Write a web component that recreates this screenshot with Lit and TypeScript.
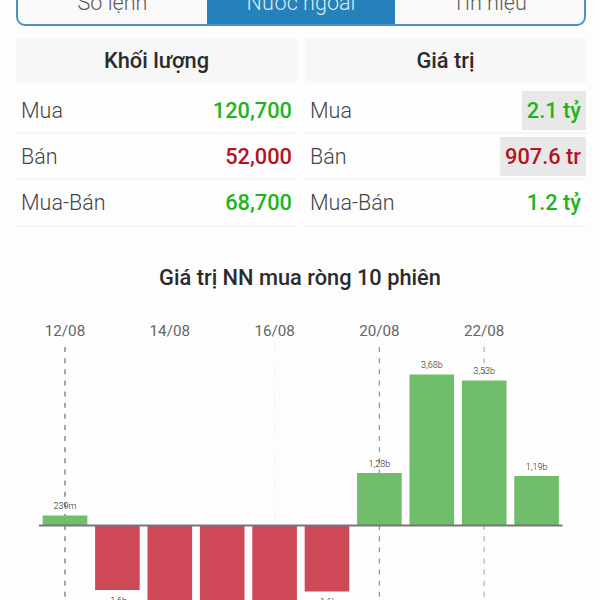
import { LitElement, html, svg, css } from 'lit';
import { customElement, property } from 'lit/decorators.js';
import { classMap } from 'lit/directives/class-map.js';

interface Row {
  label: string;
  value: string;
  tone: 'up' | 'down';
  flash?: boolean;
}

interface Bar {
  height: number;
  label: string;
  date?: string;
  guide?: 'dark' | 'mid' | 'light' | 'faint';
}

@customElement('trade-table')
class TradeTable extends LitElement {
  @property() heading = '';
  @property({ attribute: false }) rows: Row[] = [];

  static styles = css`
    :host {
      display: block;
    }

    .heading {
      height: 45px;
      line-height: 46px;
      margin-bottom: 5px;
      background: #f7f7f7;
      color: #2b2b2b;
      font-size: 21.8px;
      font-weight: 500;
      text-align: center;
    }

    .row {
      display: flex;
      justify-content: space-between;
      align-items: center;
      box-sizing: border-box;
      height: 46.2px;
      padding-left: 5px;
      border-bottom: 2px solid #f5f5f5;
      font-size: 21.5px;
    }

    .label {
      color: #444;
      font-weight: 300;
    }

    .value {
      height: 39px;
      line-height: 39px;
      padding: 0 5px;
      font-size: 21.8px;
      font-weight: 500;
    }

    .up {
      color: #1db51d;
    }

    .down {
      color: #b3141d;
    }

    .flash {
      background: #e8e8e8;
    }
  `;

  render() {
    return html`
      <div class="heading">${this.heading}</div>
      ${this.rows.map(
        (row) => html`
          <div class="row">
            <span class="label">${row.label}</span>
            <span class=${classMap({ value: true, [row.tone]: true, flash: !!row.flash })}>${row.value}</span>
          </div>
        `
      )}
    `;
  }
}

@customElement('net-chart')
class NetChart extends LitElement {
  @property({ attribute: false }) bars: Bar[] = [];

  static styles = css`
    :host {
      display: block;
    }

    svg {
      display: block;
    }

    .date {
      font-size: 15.2px;
      fill: #666;
      text-anchor: middle;
    }

    .amount {
      font-size: 9px;
      font-weight: 300;
      fill: #222;
      text-anchor: middle;
    }

    .positive {
      fill: #70bd6b;
    }

    .negative {
      fill: #cf4858;
    }

    .axis {
      stroke: #777;
      stroke-width: 2;
    }

    .guide {
      stroke-width: 1.3;
      stroke-dasharray: 5 6.13;
    }

    .dark {
      stroke: #777;
    }

    .mid {
      stroke: #999;
    }

    .light {
      stroke: #b5b5b5;
    }

    .faint {
      stroke: #f3f3f3;
    }
  `;

  // Y of the zero line, and the horizontal rhythm of the sessions
  zero = 215.5;
  firstX = 65;
  step = 52.4;
  barWidth = 44.6;

  renderBar(bar: Bar, i: number) {
    const x = this.firstX + i * this.step;
    const top = bar.height > 0 ? this.zero - bar.height : this.zero;
    const labelY = bar.height > 0 ? top - 6.5 : this.zero - bar.height + 13.5;
    return svg`
      <rect
        class=${bar.height > 0 ? 'positive' : 'negative'}
        x=${x - this.barWidth / 2} y=${top}
        width=${this.barWidth} height=${Math.abs(bar.height)}
      />
      <text class="amount" x=${x} y=${labelY}>${bar.label}</text>
    `;
  }

  render() {
    return html`
      <svg width="600" height="290" viewBox="0 0 600 290">
        ${this.bars.map((bar, i) => {
          const x = this.firstX + i * this.step;
          return svg`
            ${bar.date ? svg`<text class="date" x=${x} y="25.5">${bar.date}</text>` : ''}
            ${bar.guide ? svg`<line class="guide ${bar.guide}" x1=${x} x2=${x} y1="37" y2="290" />` : ''}
          `;
        })}
        ${this.bars.map((bar, i) => this.renderBar(bar, i))}
        <line class="axis" x1="39" x2="562.5" y1=${this.zero} y2=${this.zero} />
      </svg>
    `;
  }
}

@customElement('app-root')
class AppRoot extends LitElement {
  static styles = css`
    :host {
      display: block;
      height: 600px;
      overflow: hidden;
      background: #fdfdfd;
      font-family: Roboto, 'Noto Sans', sans-serif;
    }

    .tabs {
      display: grid;
      grid-template-columns: 1fr 188px 1fr;
      box-sizing: border-box;
      width: 570px;
      height: 46px;
      margin: -20px 0 0 16px;
      border: 2px solid #4a93b8;
      border-radius: 9px;
      overflow: hidden;
      background: #f9f9f9;
    }

    .tab {
      line-height: 42px;
      color: #5c5c5c;
      font-size: 21.6px;
      font-weight: 300;
      text-align: center;
    }

    .active {
      background: #2680b9;
      color: #d9ebf5;
    }

    .tables {
      display: grid;
      grid-template-columns: 281px 281px;
      gap: 8px;
      padding: 12px 0 0 16px;
    }

    .title {
      height: 30px;
      line-height: 30px;
      margin-top: 36.4px;
      color: #2b2b2b;
      font-size: 21.8px;
      font-weight: 500;
      text-align: center;
    }

    .chart {
      margin-top: 17px;
    }
  `;

  tabs = ['Sổ lệnh', 'Nước ngoài', 'Tín hiệu'];

  volume: Row[] = [
    { label: 'Mua', value: '120,700', tone: 'up' },
    { label: 'Bán', value: '52,000', tone: 'down' },
    { label: 'Mua-Bán', value: '68,700', tone: 'up' },
  ];

  amount: Row[] = [
    { label: 'Mua', value: '2.1 tỷ', tone: 'up', flash: true },
    { label: 'Bán', value: '907.6 tr', tone: 'down', flash: true },
    { label: 'Mua-Bán', value: '1.2 tỷ', tone: 'up' },
  ];

  bars: Bar[] = [
    { height: 10, label: '239m', date: '12/08', guide: 'dark' },
    { height: -64.5, label: '-1,6b' },
    { height: -90, label: '', date: '14/08' },
    { height: -90, label: '' },
    { height: -90, label: '', date: '16/08', guide: 'faint' },
    { height: -66, label: '-1,6b' },
    { height: 52.5, label: '1,28b', date: '20/08', guide: 'mid' },
    { height: 151, label: '3,68b' },
    { height: 145, label: '3,53b', date: '22/08', guide: 'light' },
    { height: 49.5, label: '1,19b' },
  ];

  render() {
    return html`
      <div class="tabs">
        ${this.tabs.map((tab, i) => html`<div class=${classMap({ tab: true, active: i === 1 })}>${tab}</div>`)}
      </div>
      <div class="tables">
        <trade-table heading="Khối lượng" .rows=${this.volume}></trade-table>
        <trade-table heading="Giá trị" .rows=${this.amount}></trade-table>
      </div>
      <div class="title">Giá trị NN mua ròng 10 phiên</div>
      <net-chart class="chart" .bars=${this.bars}></net-chart>
    `;
  }
}
